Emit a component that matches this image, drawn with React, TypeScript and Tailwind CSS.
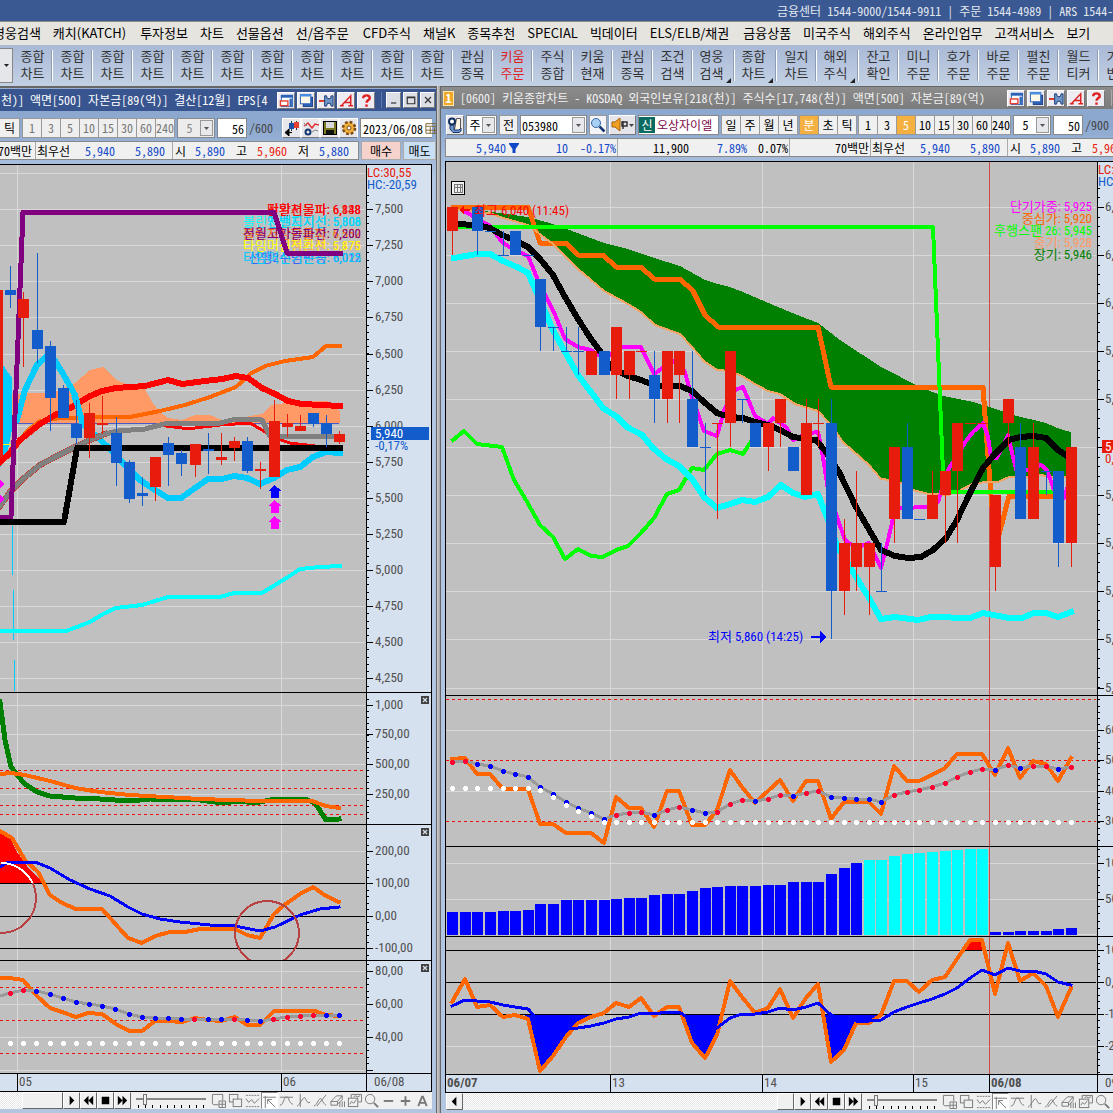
import React from "react";

/* ---------- fonts ---------- */
const SANS = "font-['Noto_Sans_CJK_KR',sans-serif]";
const MONO = "font-['Noto_Sans_Mono_CJK_KR','Noto_Sans_CJK_KR',monospace]";
const CHART = "font-['Roboto_Condensed','Noto_Sans_CJK_KR',sans-serif]";

const RED = "#e81c0c";
const BLUE = "#135ccc";
const GRID = "#d8d8d8";

/* ---------- chart helpers ---------- */
const Line = ({ p, c, w }: { p: string; c: string; w: number }) => (
  <polyline points={p} fill="none" stroke={c} strokeWidth={w} strokeLinejoin="round" strokeLinecap="square" />
);

const Grid = ({ ys, xs, x0, x1, y0, y1 }: { ys: number[]; xs: number[]; x0: number; x1: number; y0: number; y1: number }) => (
  <g stroke={GRID} strokeWidth={1}>
    {ys.map((y) => <line key={"h" + y} x1={x0} x2={x1} y1={y + 0.5} y2={y + 0.5} />)}
    {xs.map((x) => <line key={"v" + x} x1={x + 0.5} x2={x + 0.5} y1={y0} y2={y1} />)}
  </g>
);

const Dashed = ({ ys, x0, x1 }: { ys: number[]; x0: number; x1: number }) => (
  <g stroke="#f80808" strokeWidth={1} strokeDasharray="3 3">
    {ys.map((y) => <line key={y} x1={x0} x2={x1} y1={y + 0.5} y2={y + 0.5} />)}
  </g>
);

const Rules = ({ ys, x0, x1 }: { ys: number[]; x0: number; x1: number }) => (
  <g stroke="#000" strokeWidth={1}>
    {ys.map((y) => <line key={y} x1={x0} x2={x1} y1={y + 0.5} y2={y + 0.5} />)}
  </g>
);

/* [x, up?, bodyTop, bodyBottom, high, low] */
type Candle = [number, 0 | 1, number, number, number, number];
const Candles = ({ data }: { data: Candle[] }) => (
  <g>
    {data.map(([x, up, t, b, h, l], i) => (
      <g key={i} fill={up ? RED : BLUE}>
        <rect x={x} y={h} width={1} height={Math.max(1, l - h)} />
        <rect x={x - 5} y={t} width={11} height={Math.max(1, b - t)} />
      </g>
    ))}
  </g>
);

const Dots = ({ pts, fill }: { pts: [number, number, string?][]; fill?: string }) => (
  <g>
    {pts.map(([x, y, c], i) => (
      <g key={i} fill={c ?? fill}>
        <rect x={Math.round(x) - 2} y={Math.round(y) - 1} width={5} height={3} />
        <rect x={Math.round(x) - 1} y={Math.round(y) - 2} width={3} height={5} />
      </g>
    ))}
  </g>
);

const UpArrow = ({ y, c }: { y: number; c: string }) => (
  <polygon points={`274.5,${y} 281.5,${y + 6} 278.5,${y + 6} 278.5,${y + 13} 271,${y + 13} 271,${y + 6} 268,${y + 6}`} fill={c} />
);

type Tick = [number, string];
function Axis({ top, ticks, minor, from, to, labelX, children }: {
  top: number; ticks: Tick[]; minor: number; from: number; to: number; labelX: number; children?: React.ReactNode;
}) {
  const small: number[] = [];
  for (let y = ticks[0][0]; y > from; y -= minor) small.push(Math.round(y));
  for (let y = ticks[0][0]; y < to; y += minor) small.push(Math.round(y));
  return (
    <svg className={`block h-full w-full ${CHART} text-[13px]`}>
      <g transform={`translate(0,${-top})`}>
        <g fill="#000" shapeRendering="crispEdges">
          {small.map((y, i) => <rect key={i} x={0} y={y} width={2} height={1} />)}
          {ticks.map(([y]) => <rect key={y} x={0} y={y} width={6} height={1} />)}
        </g>
        {ticks.map(([y, t]) => <text key={y} x={labelX} y={y + 4} fill="#505050">{t}</text>)}
        {children}
      </g>
    </svg>
  );
}

const CloseMark = () => (
  <button aria-label="지표 닫기" className="absolute top-[3px] right-[2px] h-2 w-2 bg-[#404040]">
    <svg viewBox="0 0 8 8" className="block h-2 w-2"><path d="M2 2l4 4M6 2l-4 4" stroke="#d6e1ef" strokeWidth="1.2" /></svg>
  </button>
);

function Panel({ size, top, shift, plot, axis, axisWidth, close }: {
  size: string; top: number; shift: number; plot: React.ReactNode; axis: React.ReactNode; axisWidth: string; close?: boolean;
}) {
  return (
    <div className={`flex overflow-hidden border-t border-black ${size}`}>
      <div className="min-w-0 flex-1 bg-[#c0c0c0]">
        <svg className={`block h-full w-full ${CHART} text-[13px]`}>
          <g transform={`translate(${-shift},${-top})`} shapeRendering="crispEdges">{plot}</g>
        </svg>
      </div>
      <div className={`relative shrink-0 border-l border-black bg-[#d6e1ef] ${axisWidth}`}>
        {axis}
        {close && <CloseMark />}
      </div>
    </div>
  );
}

/* ---------- left chart data ---------- */
const leftCandles: Candle[] = [
  [-3, 1, 290, 458, 290, 458], [10, 0, 290, 295, 266, 308], [23, 1, 299, 318, 292, 367], [37, 0, 330, 349, 253, 363],
  [50, 0, 346, 398, 341, 431], [63, 0, 388, 418, 385, 418], [76, 0, 424, 438, 400, 444], [89, 1, 413, 438, 403, 458],
  [102, 1, 423, 425, 396, 434], [116, 0, 433, 463, 417, 486], [129, 0, 462, 499, 460, 503], [142, 0, 493, 496, 477, 506],
  [155, 1, 457, 487, 457, 501], [168, 0, 443, 455, 437, 486], [181, 0, 453, 464, 450, 476], [195, 1, 444, 465, 444, 477],
  [208, 0, 449, 451, 433, 474], [221, 1, 457, 460, 433, 465], [234, 1, 441, 448, 437, 461], [247, 0, 441, 471, 437, 473],
  [260, 1, 469, 471, 462, 489], [274, 1, 421, 477, 400, 477], [287, 1, 423, 427, 414, 437], [300, 1, 426, 431, 415, 431],
  [313, 0, 413, 424, 413, 427], [326, 0, 423, 434, 415, 447], [339, 1, 434, 442, 431, 444],
];

const leftLegend: [number, string, string][] = [
  [214, "#ff0000", "전환선돌파: 6,848"], [214, "#ff0000", "만발저물파: 6,138"],
  [226, "#00ffff", "볼린저밴드지선: 5,806"], [226, "#00ccff", "엔벨지지선: 5,808"],
  [238, "#ff6600", "볼린저상한돌파: 6,552"], [238, "#800080", "전월고가돌파선: 7,200"],
  [250, "#ff9966", "선행스팬: 6,170"], [250, "#ffff00", "타임머신전환선: 5,875"],
  [262, "#3366ff", "선행2수렴반등: 6,012"], [262, "#00ccff", "타임머신기준선: 6,025"],
];

const LeftMain = () => (
  <>
    <Grid ys={[173, 209, 245, 281, 317, 354, 390, 426, 462, 498, 534, 570, 606, 642, 678]} xs={[17, 281]} x0={0} x1={365} y0={165} y1={692} />
    {leftLegend.map(([y, c, t], i) => <text key={i} x={361} y={y} fill={c} textAnchor="end">{t}</text>)}
    <polygon fill="#ff9966" points="0,398 12,394 30,393 52,393 75,383 90,370 103,367 117,380 130,386 145,389 152,402 160,412 168,418 182,420 195,415 210,415 222,420 245,417 262,414 272,405 285,403 311,401 327,401 331,404 340,411 340,423 0,423" />
    <rect x={0} y={423} width={339} height={1} fill="#4a5ac8" />
    <polygon fill="#00ccff" points="3,365 12,378 12,430 8,450 0,468 0,440" />
    <rect x={3} y={444} width={8} height={1} fill="#ffff00" />
    <g fill="#00ccff"><rect x={12} y={526} width={1} height={49} /><rect x={13} y={590} width={1} height={50} /><rect x={14} y={660} width={1} height={31} /></g>
    <Line c="#ff6600" w={4} p="20,440 28,430 40,421 60,418 130,417 160,411 185,405 210,397 236,387 250,374 265,366 285,361 313,357 326,346 340,346" />
    <Line c="#ff0000" w={6} p="0,462 8,455 20,440 40,424 55,415 72,407 90,396 102,391 116,388 145,386 168,380 182,384 205,381 222,379 236,376 248,378 262,388 275,394 288,401 302,404 340,406" />
    <Line c="#ff0000" w={3} p="166,426 182,428 195,428 220,425 250,423 262,430 275,438 290,443 315,446" />
    <Line c="#00ccff" w={6} p="17,420 25,390 37,365 50,353 62,372 75,395 83,425 95,435 110,449 125,465 140,480 155,490 168,498 181,498 195,488 208,479 222,479 234,476 247,478 260,484 274,478 287,470 300,467 313,457 326,452 340,453" />
    <polygon fill="#00ccff" points="71,396 76,396 86,425 81,422" />
    <Line c="#c83020" w={6} p="0,506 10,492 24,478 40,465 55,457 75,447 90,440 105,434" />
    <Line c="#808080" w={5} p="0,506 10,492 24,478 40,465 55,457 75,447 90,440 105,434 118,431 145,429 168,423 220,423 236,419 262,420 270,436 340,436" />
    <Line c="#800080" w={5} p="0,517 11,517 14,440 18,340 23,212 274,212 287,253 340,253" />
    <Line c="#000" w={6} p="0,522 64,522 77,448 340,448" />
    <Line c="#00ffff" w={4} p="0,631 66,631 77,627 90,622 103,614 116,608 142,605 155,601 168,597 220,597 234,593 262,593 275,585 288,577 300,569 320,567 340,566" />
    <Candles data={leftCandles} />
    <UpArrow y={485} c="#0000ff" /><UpArrow y={500} c="#ff00ff" /><UpArrow y={516} c="#ff00ff" />
    <polygon fill="#ff00ff" points="0,480 4,484 0,488" /><polygon fill="#ff00ff" points="0,495 4,499 0,503" />
  </>
);

const leftDots: [number, number, string][] = (
  [993, 990, 991, 994, 998, 1002, 1004, 1006, 1009, 1014, 1017, 1018, 1018, 1019, 1019, 1019, 1019, 1019, 1020, 1021, 1019, 1017, 1016, 1015, 1015, 1015]
).map((y, i) => [10 + i * 13.17, y, "rr............r..r..rrrr..".charAt(i) === "r" ? "#ff0033" : "#0000ff"]);

/* ---------- right chart data ---------- */
const STEP = 12.63;
const bx = (i: number) => Math.round(452 + i * STEP);
const series = (v: number[], base: number) => v.map((n, i) => `${bx(i)},${Math.round(base + n / 3)}`).join(" ");

/* [index, up?, top, bottom, high, low] */
const rc: [number, 0 | 1, number, number, number, number][] = [
  [0, 1, 207, 231, 207, 255], [2, 0, 207, 231, 207, 255], [3, 0, 231, 232, 231, 232], [4, 0, 255, 256, 231, 255], [5, 0, 231, 255, 231, 255],
  [6, 0, 255, 256, 255, 256], [7, 0, 279, 327, 279, 351], [8, 0, 327, 328, 327, 351], [9, 0, 351, 352, 327, 351], [10, 0, 351, 352, 327, 375],
  [11, 1, 351, 375, 351, 375], [12, 0, 351, 375, 351, 375], [13, 1, 327, 375, 327, 399], [14, 1, 351, 375, 351, 399], [15, 1, 351, 352, 351, 352],
  [16, 0, 375, 399, 351, 423], [17, 1, 351, 399, 351, 423], [18, 1, 351, 375, 351, 423], [19, 0, 399, 447, 351, 447], [20, 0, 447, 448, 423, 495],
  [21, 1, 423, 424, 423, 519], [22, 1, 351, 423, 351, 447], [23, 0, 399, 400, 399, 423], [24, 0, 423, 447, 423, 447], [25, 1, 423, 447, 423, 471],
  [26, 1, 399, 423, 399, 447], [27, 0, 447, 471, 447, 471], [28, 1, 423, 495, 399, 495], [29, 1, 423, 424, 399, 447], [30, 0, 423, 591, 399, 639],
  [31, 1, 543, 591, 519, 615], [32, 1, 543, 567, 471, 591], [33, 1, 543, 567, 543, 615], [34, 0, 591, 592, 543, 591], [35, 1, 447, 519, 447, 543],
  [36, 0, 447, 519, 423, 519], [37, 0, 519, 520, 519, 520], [38, 1, 495, 519, 471, 519], [39, 1, 471, 495, 471, 543], [40, 1, 423, 471, 423, 543],
  [41, 1, 423, 424, 423, 424], [42, 1, 423, 424, 423, 424], [43, 1, 495, 567, 495, 591], [44, 1, 399, 423, 399, 447], [45, 0, 447, 519, 423, 519],
  [46, 1, 447, 519, 423, 519], [47, 0, 471, 472, 471, 495], [48, 0, 471, 543, 471, 567], [49, 1, 447, 543, 447, 567],
];
const rightCandles: Candle[] = rc.map(([i, u, t, b, h, l]) => [bx(i), u, t, b, h, l]);

const cloudBottom = "452,209 490,213 500,217 528,225 553,244 578,269 590,279 604,291 628,304 641,312 655,325 680,334 692,347 704,361 717,370 730,371 742,376 755,384 768,391 780,394 795,404 818,411 831,425 843,442 869,465 881,479 890,480 901,483 913,490 929,494 948,495 959,491 972,484 985,482 998,482 1009,477 1024,477 1041,475 1056,478 1071,477";
const cloudTop = "1071,432 1060,429 1046,423 1013,415 990,407 973,402 943,396 920,387 881,367 840,340 818,323 795,314 773,305 743,292 730,287 718,284 705,280 680,266 654,258 628,249 604,243 572,231 553,224 528,217 500,213 477,210 452,208";

const Cursor = ({ y0, y1 }: { y0: number; y1: number }) => <rect x={989} y={y0} width={1} height={y1 - y0} fill="#d04848" />;

const rightLegend: [number, string, string][] = [
  [211, "#ff00ff", "단기가중: 5,925"], [223, "#ff6600", "중심가: 5,920"], [235, "#00ff00", "후행스팬 26: 5,945"],
  [247, "#ff9966", "중기: 5,928"], [259, "#008000", "장기: 5,946"],
];

const RX = [610, 762, 913];
const RightMain = () => (
  <>
    <Grid ys={[207, 255, 303, 351, 399, 447, 495, 543, 591, 639, 688]} xs={RX} x0={446} x1={1096} y0={162} y1={695} />
    <Cursor y0={162} y1={695} />
    <polygon points={cloudBottom + " " + cloudTop} fill="#008000" />
    <Line c="#ff6600" w={5} p="453,207 528,207 540,243 566,243 578,255 603,255 616,267 641,267 654,279 680,279 693,291 705,315 718,327 818,327 831,387 983,387 986,430 991,495 995,540 999,535 1009,496 1066,496" />
    <Line c="#f4a460" w={2} p={cloudBottom} />
    <Line c="#00ff00" w={4} p="453,227 933,227 943,472 943,492 1066,492" />
    <Line c="#00ff00" w={4} p="453,440 464,431 477,444 502,447 514,480 526,500 540,525 553,537 565,559 578,549 591,556 603,557 616,550 628,546 641,533 654,518 667,494 679,490 692,468 704,470 717,454 730,450 743,454 750,443" />
    <Line c="#00ffff" w={6} p="454,258 477,254 490,254 503,261 517,267 528,273 540,300 553,330 565,352 578,375 603,408 617,417 627,427 642,435 653,448 666,459 679,466 692,479 704,497 717,508 730,504 742,500 755,502 768,497 781,485 793,493 805,497 818,494 828,520 838,548 850,567 869,598 881,619 895,617 918,620 931,617 970,618 983,613 1009,618 1022,618 1034,613 1046,613 1058,617 1071,612" />
    <Line c="#ff00ff" w={4} p="464,211 490,226 502,242 514,250 528,256 540,285 553,310 565,339 578,347 591,350 603,358 612,354 622,347 641,347 654,374 667,365 679,358 685,373 692,397 704,431 717,436 725,408 735,390 743,387 755,416 768,424 773,418 786,427 793,440 802,436 810,433 818,432 823,457 828,490 839,523 845,540 856,548 869,543 881,568 888,540 895,510 901,508 927,507 938,502 948,470 966,441 973,432 983,423 988,437 991,457 997,458 1008,435 1013,457 1017,473 1028,470 1041,465 1047,470 1054,490 1064,498 1070,480" />
    <Line c="#000" w={6} p="454,224 477,225 490,228 502,235 514,240 528,247 540,259 553,275 565,297 578,319 591,339 603,355 612,368 628,376 641,380 654,385 666,387 680,386 692,391 704,402 717,413 730,417 743,418 755,422 768,425 780,430 793,437 816,440 826,452 839,472 856,507 871,533 881,550 895,556 908,558 921,557 933,550 946,538 957,520 970,493 983,468 994,455 1009,440 1020,437 1033,436 1046,438 1058,450 1070,458" />
    <Candles data={rightCandles} />
    <text x={474} y={215} fill="#ff0000">최고 6,040 (11:45)</text>
    <path d="M459 210l5-5v4h6v2h-6v4z" fill="#ff0000" />
    <text x={708} y={641} fill="#0000ff">최저 5,860 (14:25)</text>
    <path d="M811 636h9v-5l6 6-6 6v-5h-9z" fill="#0000ff" />
    {rightLegend.map(([y, c, t]) => <text key={y} x={1092} y={y} fill={c} textAnchor="end">{t}</text>)}
    <g>
      <rect x={451.5} y={181.5} width={13} height={13} fill="#f0f0f0" stroke="#000" />
      <path d="M454 184.5h9M454 192.5h9M454.5 184v8M457.5 184v8M460.5 184v8M462.5 184v8M454 187.5h9" stroke="#777" fill="none" />
    </g>
  </>
);

const rsi = [208, 205, 252, 252, 297, 297, 297, 402, 402, 430, 430, 430, 458, 322, 353, 353, 410, 303, 303, 405, 405, 360, 240, 292, 338, 303, 270, 333, 272, 272, 387, 337, 337, 337, 372, 227, 272, 272, 255, 233, 192, 192, 192, 255, 175, 263, 212, 222, 273, 205];
const sig = [216, 213, 222, 228, 243, 252, 261, 291, 312, 336, 354, 369, 386, 375, 369, 366, 375, 360, 351, 360, 369, 366, 342, 330, 333, 327, 315, 318, 309, 303, 321, 324, 327, 327, 336, 315, 306, 300, 291, 279, 261, 246, 237, 240, 225, 234, 228, 228, 237, 231];
const sigTone = "rrbbbbbbbbbbbrrrbrrbbrrrbrrbrrbbbbbrrrrrrrrbrbrrbr";
const floorLine = [294, 294, 294, 294, 294, 294, 294, 300, 320, 345, 363, 378];
const osc = [305, 238, 322, 315, 352, 345, 358, 512, 468, 410, 370, 352, 340, 310, 322, 295, 348, 322, 322, 430, 475, 405, 243, 290, 338, 325, 267, 353, 295, 253, 485, 450, 370, 370, 345, 242, 242, 277, 240, 230, 178, 120, 120, 283, 128, 243, 218, 257, 352, 265];
const oscSig = [317, 301, 304, 307, 316, 322, 328, 365, 385, 388, 383, 378, 369, 358, 352, 340, 342, 337, 335, 360, 385, 385, 355, 343, 342, 337, 325, 330, 322, 310, 345, 358, 363, 364, 361, 337, 320, 310, 298, 283, 263, 235, 211, 226, 205, 214, 214, 222, 247, 254];
const volume = [912, 912, 912, 912, 911, 911, 910, 904, 904, 900, 900, 900, 900, 899, 898, 898, 895, 894, 894, 891, 888, 887, 886, 886, 886, 885, 885, 882, 882, 882, 874, 868, 863, 860, 860, 856, 854, 853, 852, 851, 850, 849, 849, 932, 932, 931, 931, 931, 929, 928];

/* ---------- chrome ---------- */
const Icon = ({ children, c = "h-4 w-4" }: { children: React.ReactNode; c?: string }) => (
  <svg viewBox="0 0 16 16" className={`block shrink-0 ${c}`} fill="none">{children}</svg>
);

const titleIcons: [string, React.ReactNode][] = [
  ["레이아웃", <><rect x="2.5" y="2.5" width="12" height="12" fill="#fff" stroke="#2a62b8" /><path d="M2 3.500h13" stroke="#2a62b8" strokeWidth="3" /><rect x="1.500" y="8.500" width="8" height="5" fill="#fff" stroke="#e84030" strokeWidth="1.500" /><path d="M12.500 6v8" stroke="#2a62b8" strokeWidth="2.500" /></>],
  ["창 복제", <><rect x="4.500" y="4.500" width="10" height="10" fill="#2a62b8" stroke="#1c3e80" /><rect x="1.500" y="1.500" width="11" height="10" fill="#fdf8e8" stroke="#2a62b8" /><path d="M1 2.500h12" stroke="#4a90e0" strokeWidth="2.500" /></>],
  ["고정", <><path d="M0 8.500h6" stroke="#e03020" strokeWidth="2" /><path d="M6 3v11h2l1-3h3l1 3h2V3h-2l-1 3H9L8 3z" fill="#6f95c8" stroke="#16386e" /></>],
  ["글꼴", <path d="M1 13.500h4M3 13L12.500 3v10M6 10h6.500M10 13.500h5" stroke="#e02020" strokeWidth="1.600" />],
  ["도움말", <><path d="M4.500 5.500C4.500 1.500 11.500 1.500 11.500 5.500c0 2-3.500 2.200-3.500 5" stroke="#e02020" strokeWidth="2.600" /><rect x="6.700" y="12.200" width="2.600" height="2.500" fill="#e02020" /></>],
];
const TitleIcons = () => (
  <div className="flex shrink-0 gap-[2px]">
    {titleIcons.map(([n, g]) => (
      <button key={n} aria-label={n} className="flex h-[17px] w-[18px] items-center justify-center border border-white border-r-[#777] border-b-[#777] bg-[#ececf2]"><Icon c="h-[15px] w-[15px]">{g}</Icon></button>
    ))}
  </div>
);

const Arrow = () => (
  <span className="pointer-events-none flex w-[13px] shrink-0 items-center justify-center border border-[#999] bg-[#e8e8ec]">
    <svg viewBox="0 0 5 3" className="h-[3px] w-[5px]"><path d="M0 0h5L2.500 3z" fill="#555" /></svg>
  </span>
);

const Pick = ({ label, value, w, dim }: { label: string; value: string; w: string; dim?: boolean }) => (
  <div className={`flex h-5 shrink-0 border border-[#888] p-px ${w} ${dim ? "bg-[#ececec] text-[#888]" : "bg-white"}`}>
    <select aria-label={label} defaultValue={value} className="min-w-0 flex-1 appearance-none bg-transparent text-center outline-none"><option>{value}</option></select>
    <Arrow />
  </div>
);

const Group = ({ items, active, dim }: { items: string[]; active?: string; dim?: boolean }) => (
  <div className="flex shrink-0">
    {items.map((t, i) => (
      <button key={t} className={`h-5 w-5 border border-[#999] leading-[18px] ${i ? "-ml-px" : ""} ${t === active ? "bg-[#f4b040] text-white" : dim ? "bg-[#efefef] text-[#777]" : "bg-[#f0f0f0]"}`}>
        <span className="flex justify-center whitespace-nowrap">{t}</span>
      </button>
    ))}
  </div>
);

const minutes = ["1", "3", "5", "10", "15", "30", "60", "240"];

const Cell = ({ w, c = "", children }: { w: string; c?: string; children?: React.ReactNode }) => (
  <span className={`shrink-0 whitespace-nowrap ${w} ${c}`}>{children}</span>
);

const B = "text-[#1048c8]";
const Quote = ({ full }: { full?: boolean }) => (
  <>
    <Cell w="w-[38px]">최우선</Cell>
    <Cell w="w-10" c={`text-right ${B}`}>5,940</Cell>
    <Cell w="w-[50px]" c={`text-right ${B}`}>5,890</Cell>
    <span className="mr-[2px] ml-[7px] w-px shrink-0 self-stretch bg-[#aaa]" />
    <Cell w="w-3">시</Cell>
    <Cell w="w-[38px]" c={`text-right ${B}`}>5,890</Cell>
    <Cell w="w-[22px]" c="text-right">고</Cell>
    <Cell w="w-10" c="text-right text-[#e81c0c]">5,960</Cell>
    {full && <><Cell w="w-[22px]" c="text-right">저</Cell><Cell w="w-10" c={`text-right ${B}`}>5,880</Cell></>}
  </>
);

/* drawing tools under each chart */
const toolIcons: [string, React.ReactNode][] = [
  ["지표 추가", <><path d="M8 12.500H2.500L1.500 11.500V1.500h11v6" /><path d="M8.500 8.500h7v7h-7zM12 8.500v7M8.500 12h7" /></>],
  ["창 겹침", <><rect x="1.500" y="1.500" width="9" height="8" /><rect x="5.500" y="6.500" width="9" height="8" fill="#f0f0f0" /></>],
  ["영역", <><path d="M1 2.500h14M1 14.500h14" strokeDasharray="2 1" /><path d="M1 6l3 4 3-3 3 4 5-5" /></>],
  ["십자선", <><path d="M3.500 16V3M1 4.500h14" /><path d="M6 7l8 8M6 7h4.500M6 7v4.500" /></>],
  ["추세선", <><path d="M1 4.500h14M1 13c4 0 4-9 7-9s2 7 7 8" /></>],
  ["수직선", <><path d="M4.500 1v14M1 14c3-1 6-9 8-9s2 7 6 5" /></>],
  ["각도", <><path d="M1 14c3-1 5-8 7-8s2 5 6 7M4 14L14 2" /></>],
  ["지우개", <><path d="M1 9l6-6h6l-5 6zM1 9v4h7V9M8 12l5-5V3M10.500 15V9.500M13 15V9M15.500 15V9" /></>],
  ["그림", <><path d="M4.500 5V1.500h11v8H12" /><rect x="1.500" y="5.500" width="10" height="9" /><path d="M3 12l2-3 2 2 3-4M7 4l2-1 2 1 3-1" /></>],
  ["돋보기", <><circle cx="6.500" cy="6.500" r="5" /><path d="M10.500 10.500l4.500 4.500" strokeWidth="2" /></>],
  ["축소", <path d="M3 8.500h10" strokeWidth="2" />],
  ["확대", <path d="M3 8.500h10M8 3.500v10" strokeWidth="2" />],
  ["자동", <path d="M3.500 14L7.500 4h1l4 10M5 10.500h6" strokeWidth="2" />],
];

const playback: [string, string][] = [
  ["재생", "M6 3l5 5-5 5z"], ["뒤로", "M8 3v10L3 8zM13 3v10L8 8z"], ["정지", "M4 4h8v8H4z"], ["앞으로", "M3 3l5 5-5 5zM8 3l5 5-5 5z"],
];
const SmallBtn = ({ n, d }: { n: string; d: string }) => (
  <button aria-label={n} className="flex h-[17px] w-[17px] shrink-0 items-center justify-center border border-white border-r-[#666] border-b-[#666] bg-[#f0f0f0]">
    <Icon c="h-[15px] w-[15px]"><path d={d} fill="#000" /></Icon>
  </button>
);
const HATCH = "bg-[repeating-conic-gradient(#e6e6e6_0_25%,#ffffff_0_50%)] bg-[length:2px_2px]";

function ScrollBar({ lead, track, thumb, tools }: { lead?: boolean; track: string; thumb: string; tools: string }) {
  return (
    <div className="flex h-[17px] shrink-0 items-center overflow-hidden bg-[#f0f0f0]">
      {lead && <SmallBtn n="왼쪽" d="M10 3v10L5 8z" />}
      <div className={`h-full ${HATCH} ${track}`} />
      <button aria-label="스크롤 손잡이" className={`h-[17px] shrink-0 border border-white border-r-[#666] border-b-[#666] bg-[#f0f0f0] ${thumb}`} />
      {playback.map(([n, d]) => <SmallBtn key={n} n={n} d={d} />)}
      <div className="ml-[5px] flex w-[70px] shrink-0 flex-col">
        <input type="range" aria-label="재생 속도" defaultValue={10}
          className="h-3 w-full appearance-none bg-[linear-gradient(#888,#888)] bg-[length:100%_2px] bg-center bg-no-repeat [&::-webkit-slider-thumb]:h-[11px] [&::-webkit-slider-thumb]:w-1 [&::-webkit-slider-thumb]:appearance-none [&::-webkit-slider-thumb]:border [&::-webkit-slider-thumb]:border-[#777] [&::-webkit-slider-thumb]:bg-[#f0f0f0]" />
        <div className="flex justify-between px-[2px]">{[0, 1, 2, 3, 4, 5, 6, 7, 8, 9].map((i) => <span key={i} className="h-[3px] w-px bg-black" />)}</div>
      </div>
      <div className={`ml-1 flex overflow-hidden ${tools}`}>
        {toolIcons.map(([n, g], i) => (
          <button key={n} aria-label={n} className={`flex h-[17px] w-[17px] shrink-0 items-center justify-center ${i === 3 ? "border border-[#888] border-r-white border-b-white bg-white" : ""}`}>
            <Icon c="h-[15px] w-[15px]"><g stroke="#777">{g}</g></Icon>
          </button>
        ))}
      </div>
    </div>
  );
}

const menu = ["영웅검색", "캐치(KATCH)", "투자정보", "차트", "선물옵션", "선/옵주문", "CFD주식", "채널K", "종목추천", "SPECIAL", "빅데이터", "ELS/ELB/채권", "금융상품", "미국주식", "해외주식", "온라인업무", "고객서비스", "보기"];
/* [line 1, line 2, has a submenu corner] */
const quick: [string, string, boolean?][] = [
  ...Array.from({ length: 11 }, () => ["종합", "차트"] as [string, string]),
  ["관심", "종목"], ["키움", "주문"], ["주식", "종합"], ["키움", "현재"], ["관심", "종목"], ["조건", "검색"], ["영웅", "검색", true],
  ["종합", "차트", true], ["일지", "차트"], ["해외", "주식", true], ["잔고", "확인"], ["미니", "주문"], ["호가", "주문"], ["바로", "주문"],
  ["펼친", "주문"], ["월드", "티커"], ["기업", "번호"],
];

const winBtns: [string, string][] = [["최소화", "M4 12h7"], ["최대화", "M3 4h10v9H3zM3 5h10"], ["닫기", "M4 4l8 8M12 4l-8 8"]];

export default function App() {
  return (
    <div className={`flex h-screen flex-col overflow-hidden bg-[#8a8a8a] text-[12px] leading-none text-black ${MONO}`}>
      <header className="flex h-[21px] shrink-0 items-center justify-end bg-[#3a5892] text-[#e4e8f0]">
        <div className="w-[336px] overflow-hidden whitespace-nowrap leading-[20px]">금융센터 1544-9000/1544-9911 | 주문 1544-4989 | ARS 1544-9900</div>
      </header>

      <nav className={`flex h-6 shrink-0 items-center gap-3 overflow-hidden border-t border-[#8c8c8c] bg-[#e6e4df] pb-[2px] text-[13px] whitespace-nowrap ${SANS}`}>
        {menu.map((m, i) => <a key={m} href="#" className={i === 0 ? "-ml-[7px] shrink-0" : /[/(]/.test(m) ? "shrink-0 pr-[2px]" : "shrink-0"}>{m}</a>)}
      </nav>

      <div className={`flex h-[41px] shrink-0 items-center overflow-hidden bg-linear-to-b from-[#a9b9d6] to-[#c3d1e4] pb-px text-[13px] leading-[17px] text-[#333] ${SANS}`}>
        <button aria-label="목록 열기" className="flex h-[35px] w-[13px] shrink-0 items-center justify-center border border-l-0 border-[#888] bg-[#e4e6ea]">
          <svg viewBox="0 0 5 3" className="h-[3px] w-[5px]"><path d="M0 0h5L2.500 3z" fill="#222" /></svg>
        </button>
        {quick.map(([a, b, sub], i) => (
          <button key={i} className={`relative flex h-[31px] shrink-0 flex-col items-center justify-center border-r border-white pb-[2px] shadow-[inset_-1px_0_0_#8f9cb4] ${sub ? "w-[42px] pr-1" : "w-10"} ${i === 12 ? "text-[#e02020]" : ""}`}>
            <span>{a}</span><span>{b}</span>
            {sub && <svg viewBox="0 0 5 5" className="absolute right-[3px] -bottom-[2px] h-[5px] w-[5px]"><path d="M5 0v5H0z" fill="#222" /></svg>}
          </button>
        ))}
      </div>

      <main className="grid min-h-0 flex-1 grid-cols-[436fr_5fr_672fr]">
        {/* left window */}
        <section className="flex min-w-0 flex-col overflow-hidden border-t-2 border-[#666] bg-[linear-gradient(#8da8cf,#8da8cf_40px,#b2c6e2_90px)]">
          <div className="flex h-[23px] shrink-0 items-center overflow-hidden border-t border-[#9aaed0] bg-[#38558f] pr-px text-white">
            <h2 className="min-w-0 flex-1 overflow-hidden whitespace-nowrap pl-px leading-[20px]">천)] 액면[500] 자본금[89(억)] 결산[12월] EPS[4</h2>
            <TitleIcons />
            <span className="mr-1 ml-[6px] h-4 w-px shrink-0 bg-[#5f79ad]" />
            <div className="flex shrink-0 gap-[2px]">
              {winBtns.map(([n, d]) => (
                <button key={n} aria-label={n} className="flex h-4 w-[15px] items-center justify-center border border-white border-r-[#777] border-b-[#777] bg-[#dcdfe6]"><Icon c="h-3 w-3"><path d={d} stroke="#333" strokeWidth="1.600" /></Icon></button>
              ))}
            </div>
          </div>
          <div className="mt-[7px] flex h-5 shrink-0 items-center gap-[2px] pr-1">
            <button className="h-5 w-5 border border-l-0 border-[#999] bg-[#f0f0f0]">틱</button>
            <Group items={minutes} dim />
            <Pick label="분 단위" value="5" w="w-[38px]" dim />
            <input aria-label="표시 개수" defaultValue="56" className="h-5 w-[30px] border border-[#888] bg-white pr-[2px] text-right outline-none" />
            <span className="w-[31px] shrink-0 text-[#444]">/600</span>
            <div className="flex shrink-0">
              <button aria-label="봉 유형" className="h-5 w-[19px] border border-white border-b-[#777] bg-[#e8e8ec]"><Icon c="mx-auto h-4 w-4"><path d="M7.500 1v10M12.500 1v9" stroke="#234" /><rect x="5" y="3" width="5" height="6" fill="#1c4fa8" /><rect x="10" y="2" width="5" height="6" fill="#e84030" /><path d="M1 12.500l4-3.500v7zM4 12.500h4" stroke="#000" fill="#000" /></Icon></button>
              <button aria-label="지표 설정" className="h-5 w-[19px] border border-white border-b-[#777] bg-[#e8e8ec]"><Icon c="mx-auto h-4 w-4"><path d="M1 6l4-3 4 5 3-4 4 1" stroke="#e03030" strokeWidth="1.500" /><path d="M1 3l3 3M9 12l3-2 3 1" stroke="#888" /><circle cx="5" cy="12" r="2.500" stroke="#16386e" strokeWidth="2" /></Icon></button>
              <button aria-label="저장" className="h-5 w-[19px] border border-white border-b-[#777] bg-[#e8e8ec]"><Icon c="mx-auto h-4 w-4"><rect x="1.500" y="1.500" width="13" height="13" fill="#7a7a20" stroke="#000" /><rect x="4" y="2" width="8" height="6" fill="#d8d8d8" /><rect x="4" y="10" width="8" height="4" fill="#111" /></Icon></button>
              <button aria-label="환경 설정" className="h-5 w-[19px] border border-white border-b-[#777] bg-[#e8e8ec]"><Icon c="mx-auto h-4 w-4"><circle cx="8" cy="8" r="6" fill="#f0b040" stroke="#7a4a10" strokeWidth="2.500" strokeDasharray="2.700 2" /><circle cx="8" cy="8" r="2" fill="#fff" stroke="#7a4a10" /></Icon></button>
            </div>
            <div className="flex h-5 min-w-0 flex-1 items-center border border-r-0 border-[#888] bg-white">
              <input aria-label="기준일" defaultValue="2023/06/08" className="w-[64px] shrink-0 pl-[2px] outline-none" />
              <Icon c="h-[14px] w-[14px]"><path d="M1 3h14v11H1zM1 6h14M6 7v7M11 7v7M1 10.500h14" stroke="#7a5a20" /></Icon>
            </div>
          </div>
          <div className="mt-[3px] mb-1 flex h-[19px] shrink-0 items-stretch gap-[2px] pr-1">
            <div className="flex min-w-0 flex-1 items-center overflow-hidden border border-l-0 border-[#888] bg-[#f0f0f0]">
              <Cell w="w-8" c="flex justify-end">70백만</Cell>
              <span className="mr-px ml-[3px] w-px shrink-0 self-stretch bg-[#aaa]" />
              <Quote full />
            </div>
            <button className="w-10 shrink-0 border border-[#aaa] bg-[#f6d2cc]">매수</button>
            <button className="-mr-1 w-[33px] shrink-0 border border-[#aaa] bg-[#c9e0f4]">매도</button>
          </div>
          <div className="mr-1 flex min-h-0 flex-1 flex-col border-r border-black">
            <Panel size="min-h-0 flex-1" top={165} shift={0} axisWidth="w-[65px]" plot={<LeftMain />}
              axis={
                <Axis top={165} labelX={8} minor={7.22} from={190} to={690}
                  ticks={[[209, "7,500"], [245, "7,250"], [281, "7,000"], [317, "6,750"], [354, "6,500"], [390, "6,250"], [426, "6,000"], [462, "5,750"], [498, "5,500"], [534, "5,250"], [570, "5,000"], [606, "4,750"], [642, "4,500"], [678, "4,250"]]}>
                  <text x={0} y={177} fill="#e81c0c">LC:30,55</text>
                  <text x={0} y={189} fill={BLUE}>HC:-20,59</text>
                  <rect x={4} y={427} width={58} height={13} fill={BLUE} />
                  <text x={8} y={438} fill="#fff">5,940</text>
                  <text x={8} y={450} fill={BLUE}>-0,17%</text>
                </Axis>
              } />
            <Panel size="h-[132px] shrink-0" top={693} shift={0} axisWidth="w-[65px]" close
              plot={<>
                <Grid ys={[705, 734, 764, 794]} xs={[17, 281]} x0={0} x1={365} y0={693} y1={824} />
                <Dashed ys={[770, 788, 805, 814]} x0={0} x1={364} />
                <Line c="#008000" w={5} p="0,702 5,740 11,767 17,775 25,784 37,792 50,796 75,798 100,799 130,801 150,799 200,800 222,803 240,801 255,803 275,799 305,799 315,803 326,820 339,819" />
                <Line c="#ff6600" w={4} p="0,774 11,773 25,775 50,781 75,788 100,792 130,795 165,797 200,799 260,801 312,801 326,806 339,808" />
              </>}
              axis={<Axis top={693} labelX={8} minor={5.93} from={696} to={822} ticks={[[705, "1,000"], [734, "750,00"], [764, "500,00"], [794, "250,00"]]} />} />
            <Panel size="h-[136px] shrink-0" top={825} shift={0} axisWidth="w-[65px]" close
              plot={<>
                <Grid ys={[851]} xs={[17, 281]} x0={0} x1={365} y0={825} y1={960} />
                <polygon fill="#ff0000" points="0,832 10,838 17,852 30,870 40,880 43,883 0,883" />
                <Rules ys={[883, 916, 948]} x0={0} x1={365} />
                <Line c="#ff6600" w={4} p="0,831 12,838 25,860 38,872 50,895 62,903 76,909 102,909 128,938 142,943 155,936 170,932 185,932 200,929 235,929 247,935 260,938 274,914 283,906 300,894 313,887 326,896 339,902" />
                <Line c="#0000ff" w={3} p="0,867 8,862 35,862 50,868 70,880 90,889 110,896 128,907 142,914 160,919 180,922 210,925 235,926 260,931 275,927 300,915 320,909 339,907" />
                <circle cx={267} cy={933} r={32} fill="none" stroke="#b84040" strokeWidth={2} />
                <circle cx={1} cy={898} r={35} fill="none" stroke="#b84040" strokeWidth={2} />
                <path d="M1 863A35 35 0 0 1 32.500 883" fill="none" stroke="#fff" strokeWidth={2} />
              </>}
              axis={<Axis top={825} labelX={8} minor={6.47} from={828} to={958} ticks={[[851, "200,00"], [883, "100,00"], [916, "0,00"], [948, "-100,00"]]} />} />
            <Panel size="h-[113px] shrink-0" top={961} shift={0} axisWidth="w-[65px]" close
              plot={<>
                <Grid ys={[971, 1004, 1037, 1070]} xs={[17, 281]} x0={0} x1={365} y0={961} y1={1073} />
                <Dashed ys={[987, 1020, 1053]} x0={0} x1={364} />
                <Line c="#ff6600" w={4} p="0,978 10,978 23,980 37,996 50,1008 62,1012 76,1017 88,1013 102,1014 116,1024 129,1031 142,1031 155,1021 168,1021 182,1022 195,1018 208,1020 221,1021 235,1017 247,1025 260,1025 274,1011 315,1011 326,1015 339,1016" />
                <Line c="#9a9a9a" w={3} p={"0,996 " + leftDots.map(([x, y]) => `${x},${y}`).join(" ")} />
                <Dots pts={leftDots} />
                <Dots fill="#fff" pts={leftDots.map(([x]) => [x, 1043])} />
              </>}
              axis={<Axis top={961} labelX={8} minor={6.6} from={964} to={1072} ticks={[[971, "80,00"], [1004, "60,00"], [1037, "40,00"], [1070, ""]]} />} />
            <div className={`flex h-[18px] shrink-0 border-t border-black bg-[#d6e1ef] text-[13px] leading-[15px] text-[#505050] ${CHART}`}>
              <span className="w-[17px]" />
              <span className="flex-1 border-l border-black pl-px">05</span>
              <span className="w-[85px] border-l border-black pl-px">06</span>
              <span className="w-[65px] border-l border-black pl-[7px]">06/08</span>
            </div>
            <div className="h-px shrink-0 bg-black" />
          </div>
          <div className="mr-1 shrink-0 pb-1"><ScrollBar track="w-[22px] shrink-0" thumb="w-[41px]" tools="flex-1" /></div>
        </section>

        {/* splitter */}
        <div className="border-x border-[#666] bg-[linear-gradient(90deg,#d0d0d0,#a0a0a0)]" />

        {/* right window */}
        <section className="flex min-w-0 flex-col overflow-hidden border-t border-[#666] bg-[linear-gradient(#8da8cf,#8da8cf_40px,#b2c6e2_90px)]">
          <div className="flex h-[22px] shrink-0 items-center overflow-hidden bg-linear-to-b from-[#8c8c8c] to-[#7c7c7c] pl-[2px] text-[#f0f0f0]">
            <span className="flex h-[15px] w-[11px] shrink-0 items-center justify-center border border-[#fce8b0] bg-[#f0a828] font-bold text-white">1</span>
            <h2 className="ml-[6px] min-w-0 flex-1 overflow-hidden whitespace-nowrap leading-[20px]">[0600] 키움종합차트 - KOSDAQ 외국인보유[218(천)] 주식수[17,748(천)] 액면[500] 자본금[89(억)</h2>
            <TitleIcons />
            <span className="mr-px ml-[6px] h-4 w-px shrink-0 bg-[#aaa]" />
          </div>
          <div className="mt-[6px] flex h-5 shrink-0 items-center gap-[2px] overflow-hidden pl-[5px]">
            <button aria-label="관심종목" className="flex h-5 w-[18px] shrink-0 items-center justify-center border border-white border-r-[#777] border-b-[#777] bg-[#e8e8ec]"><Icon><path d="M9.500 1.500h4v10c0 3-6 4-6 1z" fill="#fdf6e4" stroke="#555" /><path d="M3 8h4v5h5l2-2v3l-2 1.500H6L3 12z" fill="#6f95c8" stroke="#16386e" /><circle cx="5" cy="4.500" r="3" fill="#fff" stroke="#12305e" strokeWidth="2" /></Icon></button>
            <Pick label="구분" value="주" w="w-[31px]" />
            <button className="h-5 w-[19px] shrink-0 border border-[#999] bg-[#f0f0f0]">전</button>
            <div className="flex h-5 w-[67px] shrink-0 border border-[#888] bg-white p-px">
              <input aria-label="종목 코드" defaultValue="053980" className="min-w-0 flex-1 outline-none" />
              <Arrow />
            </div>
            <button aria-label="종목 검색" className="flex h-5 w-[18px] shrink-0 items-center justify-center border border-[#999] bg-[#f4f4f8]"><Icon><circle cx="6" cy="6" r="4.500" fill="#a8d0f4" stroke="#3468a8" /><path d="M9.500 9.500l5 5" stroke="#16386e" strokeWidth="2.500" /></Icon></button>
            <button aria-label="소리" className="flex h-5 w-[27px] shrink-0 items-center justify-center border border-white border-r-[#777] border-b-[#777] bg-[#e4e4ea]"><svg viewBox="0 0 24 16" className="h-4 w-6"><path d="M1 5h3l5-4v13l-5-4H1z" fill="#f0a020" stroke="#a86008" /><path d="M11 5h5v4h-5zM12 4v8" stroke="#333" fill="none" strokeWidth="1.500" /><path d="M18 7h5l-2.500 3z" fill="#444" /></svg></button>
            <div className="flex h-5 w-[81px] shrink-0 items-center overflow-hidden border border-[#888] bg-white">
              <span className="flex h-4 w-4 shrink-0 items-center justify-center bg-[#0b6b60] text-white">신</span>
              <span className="ml-[2px] whitespace-nowrap text-[#7d0848]">오상자이엘</span>
            </div>
            <div className="flex shrink-0 gap-px">
              <Group items={["일", "주", "월", "년"]} />
              <Group items={["분", "초", "틱"]} active="분" />
              <Group items={minutes} active="5" />
            </div>
            <Pick label="분 단위" value="5" w="w-[38px]" />
            <input aria-label="표시 개수" defaultValue="50" className="h-5 w-[30px] shrink-0 border border-[#888] bg-white pr-[2px] text-right outline-none" />
            <span className="shrink-0 text-[#444]">/900</span>
          </div>
          <div className="mt-[3px] mb-1 ml-1 flex h-[19px] shrink-0 items-center overflow-hidden border border-r-0 border-[#888] bg-[#f0f0f0]">
            <Cell w="w-[60px]" c={`text-right ${B}`}>5,940</Cell>
            <svg viewBox="0 0 10 10" className="mx-[3px] h-[10px] w-[10px] shrink-0"><path d="M0 0h10v1L6.500 6v4h-3V6L0 1z" fill="#1048c8" /></svg>
            <Cell w="w-[46px]" c={`text-right ${B}`}>10</Cell>
            <Cell w="w-12" c={`text-right ${B}`}>-0.17%</Cell>
            <span className="mx-px w-px shrink-0 self-stretch bg-[#aaa]" />
            <Cell w="w-[70px]" c="text-right">11,900</Cell>
            <Cell w="w-[58px]" c={`text-right ${B}`}>7.89%</Cell>
            <Cell w="w-[41px]" c="text-right">0.07%</Cell>
            <span className="mx-px w-px shrink-0 self-stretch bg-[#aaa]" />
            <Cell w="w-[78px]" c="text-right">70백만</Cell>
            <span className="mx-px w-px shrink-0 self-stretch bg-[#aaa]" />
            <Quote />
          </div>
          <div className="ml-1 flex min-h-0 flex-1 flex-col border-l border-black">
            <Panel size="min-h-0 flex-1" top={162} shift={446} axisWidth="w-4" plot={<RightMain />}
              axis={
                <Axis top={162} labelX={7} minor={9.6} from={185} to={694}
                  ticks={[[207, "6,040"], [255, "6,020"], [303, "6,000"], [351, "5,980"], [399, "5,960"], [447, ""], [495, "5,920"], [543, "5,900"], [591, "5,880"], [639, "5,860"], [688, "5,840"]]}>
                  <text x={0} y={174} fill="#e81c0c">LC:30,55</text>
                  <text x={0} y={186} fill={BLUE}>HC:-20,59</text>
                  <rect x={4} y={440} width={58} height={13} fill="#e81c0c" />
                  <text x={7} y={451} fill="#fff">5,940</text>
                  <text x={7} y={463} fill="#e81c0c">0,34%</text>
                </Axis>
              } />
            <Panel size="h-[151px] shrink-0" top={696} shift={446} axisWidth="w-4"
              plot={<>
                <Grid ys={[730, 791]} xs={RX} x0={446} x1={1096} y0={696} y1={846} />
                <Dashed ys={[699, 760, 821]} x0={446} x1={1096} />
                <Cursor y0={696} y1={846} />
                <Line c="#ff6600" w={4} p={series(rsi, 690)} />
                <Line c="#9a9a9a" w={3} p={series(sig, 690)} />
                <Dots pts={sig.map((v, i) => [bx(i), 690 + v / 3, sigTone.charAt(i) === "r" ? "#ff0033" : "#0000ff"])} />
                <Dots fill="#fff" pts={sig.map((_, i) => [bx(i), 690 + (floorLine[i] ?? 396) / 3])} />
              </>}
              axis={<Axis top={696} labelX={7} minor={6.1} from={697} to={845} ticks={[[730, "60,00"], [760, "50,00"], [791, "40,00"], [821, "30,00"]]} />} />
            <Panel size="h-[90px] shrink-0" top={847} shift={446} axisWidth="w-4"
              plot={<>
                <Grid ys={[863, 899, 934]} xs={RX} x0={446} x1={1096} y0={847} y1={936} />
                {volume.map((y, i) => <rect key={i} x={bx(i) - 5} y={y} width={11} height={935 - y} fill={i >= 33 && i <= 42 ? "#00ffff" : "#0000ff"} />)}
                <Cursor y0={847} y1={936} />
              </>}
              axis={<Axis top={847} labelX={7} minor={7.2} from={848} to={934} ticks={[[863, "100,00"], [899, "50,00"]]} />} />
            <Panel size="h-[138px] shrink-0" top={937} shift={446} axisWidth="w-4"
              plot={<>
                <Grid ys={[1046]} xs={RX} x0={446} x1={1096} y0={937} y1={1074} />
                <Rules ys={[950, 982, 1014]} x0={446} x1={1096} />
                <Cursor y0={937} y1={1074} />
                <g fill="#0000ff">
                  <polygon points="524,1015 528,1019 540,1069 553,1056 566,1037 578,1023 592,1015" />
                  <polygon points="683,1015 692,1043 705,1058 717,1035 721,1015" />
                  <polygon points="824,1015 831,1062 843,1050 856,1023 869,1023 881,1015" />
                </g>
                <polygon fill="#ff0000" points="965,950 970,940 983,940 986,950" />
                <Line c="#ff6600" w={4} p={series(osc, 900)} />
                <Line c="#0000ff" w={3} p={series(oscSig, 900)} />
              </>}
              axis={<Axis top={937} labelX={7} minor={6.4} from={938} to={1072} ticks={[[950, "100,00"], [982, "0,00"], [1014, "-100,00"], [1046, "-200,00"]]} />} />
            <div className={`grid h-[18px] shrink-0 grid-cols-[164fr_152fr_151fr_76fr_108fr_16px] border-t border-black bg-[#d6e1ef] text-[13px] leading-[15px] text-[#505050] ${CHART}`}>
              <span className="pl-px font-bold">06/07</span>
              <span className="border-l border-black pl-px">13</span>
              <span className="border-l border-black pl-px">14</span>
              <span className="border-l border-black pl-px">15</span>
              <span className="border-l border-black pl-px font-bold">06/08</span>
              <span className="overflow-hidden border-l border-black pl-[7px]">09</span>
            </div>
            <div className="h-px shrink-0 bg-black" />
          </div>
          <div className="ml-[5px] shrink-0 pb-[3px]"><ScrollBar lead track="min-w-0 flex-1" thumb="w-[17px]" tools="w-[172px] shrink-0" /></div>
        </section>
      </main>
    </div>
  );
}
